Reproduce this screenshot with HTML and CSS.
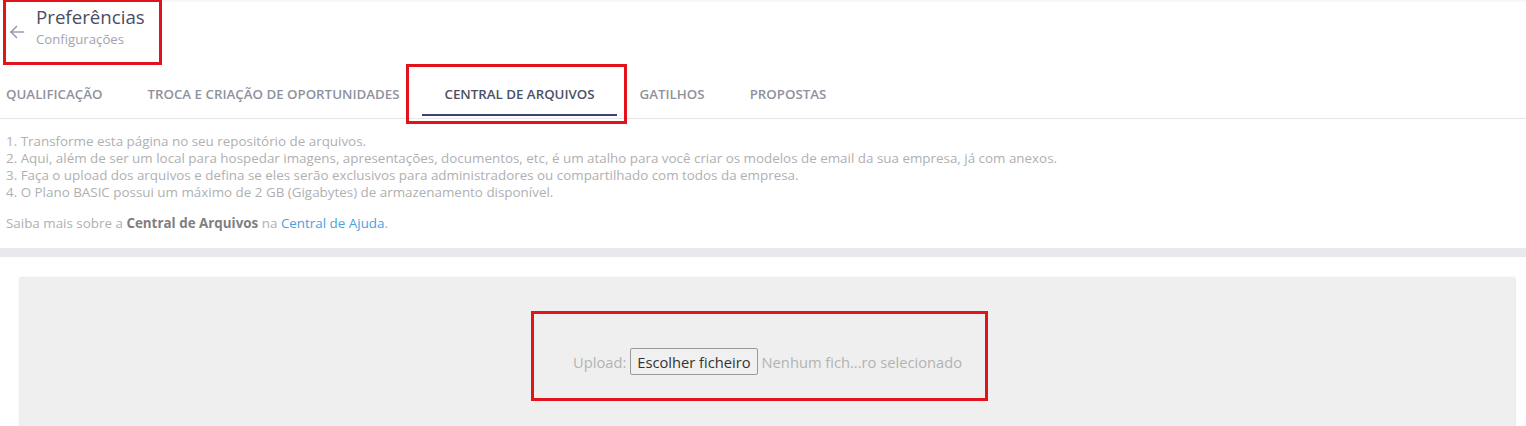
FILE: index.html
```html
<!DOCTYPE html>
<html lang="pt">
<head>
    <meta charset="UTF-8">
    <meta name="viewport" content="width=device-width, initial-scale=1.0">
    <title>Preferências</title>
    <link rel="stylesheet" href="styles.css">
</head>
<body>
    <header class="page-head">
        <a href="#" class="back-link">
            <svg width="16" height="16" viewBox="0 0 16 16" fill="none" stroke="#9b9db6" stroke-width="1.7" stroke-linecap="round" stroke-linejoin="round">
                <path d="M14.5 8H2"/>
                <path d="M7.5 2.5L2 8l5.5 5.5"/>
            </svg>
        </a>
        <div class="head-text">
            <h1>Preferências</h1>
            <span class="subtitle">Configurações</span>
        </div>
    </header>

    <nav class="tabs">
        <a href="#" class="tab">Qualificação</a>
        <a href="#" class="tab">Troca e criação de oportunidades</a>
        <a href="#" class="tab active">Central de arquivos<span class="mark mark-tab"></span></a>
        <a href="#" class="tab">Gatilhos</a>
        <a href="#" class="tab">Propostas</a>
    </nav>

    <div class="info">
        <p>1. Transforme esta página no seu repositório de arquivos.</p>
        <p>2. Aqui, além de ser um local para hospedar imagens, apresentações, documentos, etc, é um atalho para você criar os modelos de email da sua empresa, já com anexos.</p>
        <p>3. Faça o upload dos arquivos e defina se eles serão exclusivos para administradores ou compartilhado com todos da empresa.</p>
        <p>4. O Plano BASIC possui um máximo de 2 GB (Gigabytes) de armazenamento disponível.</p>
        <p class="more">Saiba mais sobre a <b>Central de Arquivos</b> na <a href="#">Central de Ajuda</a>.</p>
    </div>

    <section class="files">
        <div class="upload-panel">
            <div class="upload-row">
                <span class="upload-label">Upload:</span>
                <button class="file-btn">Escolher ficheiro</button>
                <span class="file-name">Nenhum fich...ro selecionado</span>
                <span class="mark mark-upload"></span>
            </div>
        </div>
    </section>
</body>
</html>
```

FILE: styles.css
```css
body {
    font-family: "Open Sans", "Liberation Sans", sans-serif;
    margin: 0;
    padding: 0;
    background: #fff;
    box-shadow: inset 0 3px 3px -2px rgba(0, 0, 0, 0.06);
    height: 426px;
    overflow: hidden;
}
.page-head {
    display: inline-flex;
    align-items: flex-start;
    margin-left: 3px;
    padding: 3px 14px 0 3px;
    height: 57px;
    border: 3px solid #e2141b;
    border-top-width: 2px;
}
.back-link {
    display: block;
    margin-top: 19px;
    width: 16px;
    height: 16px;
}
.back-link svg {
    display: block;
}
.head-text {
    margin-left: 11px;
}
.page-head h1 {
    margin: 0;
    font-size: 18.7px;
    font-weight: 400;
    line-height: 23px;
    color: #4a4e64;
}
.subtitle {
    display: block;
    font-size: 13.2px;
    line-height: 18px;
    color: #a2a4ad;
    margin-top: 2px;
}
.tabs {
    display: flex;
    margin-left: -16.5px;
    margin-top: -1px;
    padding-bottom: 2px;
    border-bottom: 1px solid #e7e7ea;
}
.tab {
    position: relative;
    display: block;
    padding: 21px 22.5px 11px;
    font-size: 13.3px;
    font-weight: 600;
    line-height: 18px;
    text-transform: uppercase;
    text-decoration: none;
    color: #8f929d;
    border-bottom: 2px solid transparent;
}
.tab.active {
    color: #4c5166;
    border-bottom-color: #3f4566;
}
.mark {
    position: absolute;
    border: 3px solid #e2141b;
}
.mark-tab {
    left: -16px;
    right: -10px;
    top: 0;
    bottom: -10px;
}
.info {
    padding: 14px 6px 16px;
    font-size: 13.4px;
    line-height: 17px;
    color: #b0b0b2;
}
.info p {
    margin: 0;
}
.info .more {
    margin-top: 14px;
}
.info b {
    color: #7f7f82;
    font-weight: 700;
}
.info a {
    color: #4aa1e2;
    text-decoration: none;
}
.files {
    border-top: 9px solid #e8e9ed;
    padding: 21px 11px 0 20px;
}
.upload-panel {
    background: #efefef;
    box-shadow: 0 0 2px rgba(0, 0, 0, 0.22);
    padding-top: 70px;
    height: 200px;
    display: flex;
    justify-content: center;
    align-items: flex-start;
}
.upload-row {
    position: relative;
    display: flex;
    align-items: center;
    font-size: 14.7px;
    color: #b3b3b3;
}
.file-btn {
    margin: 0 4px 0 4px;
    height: 27px;
    padding: 0 6px;
    font-family: "Open Sans", "Liberation Sans", sans-serif;
    font-size: 14.7px;
    color: #333;
    background: #f0f0f0;
    border: 1px solid #999;
    border-radius: 2px;
}
.mark-upload {
    left: -42px;
    right: -26px;
    top: -37px;
    bottom: -26px;
}
```
